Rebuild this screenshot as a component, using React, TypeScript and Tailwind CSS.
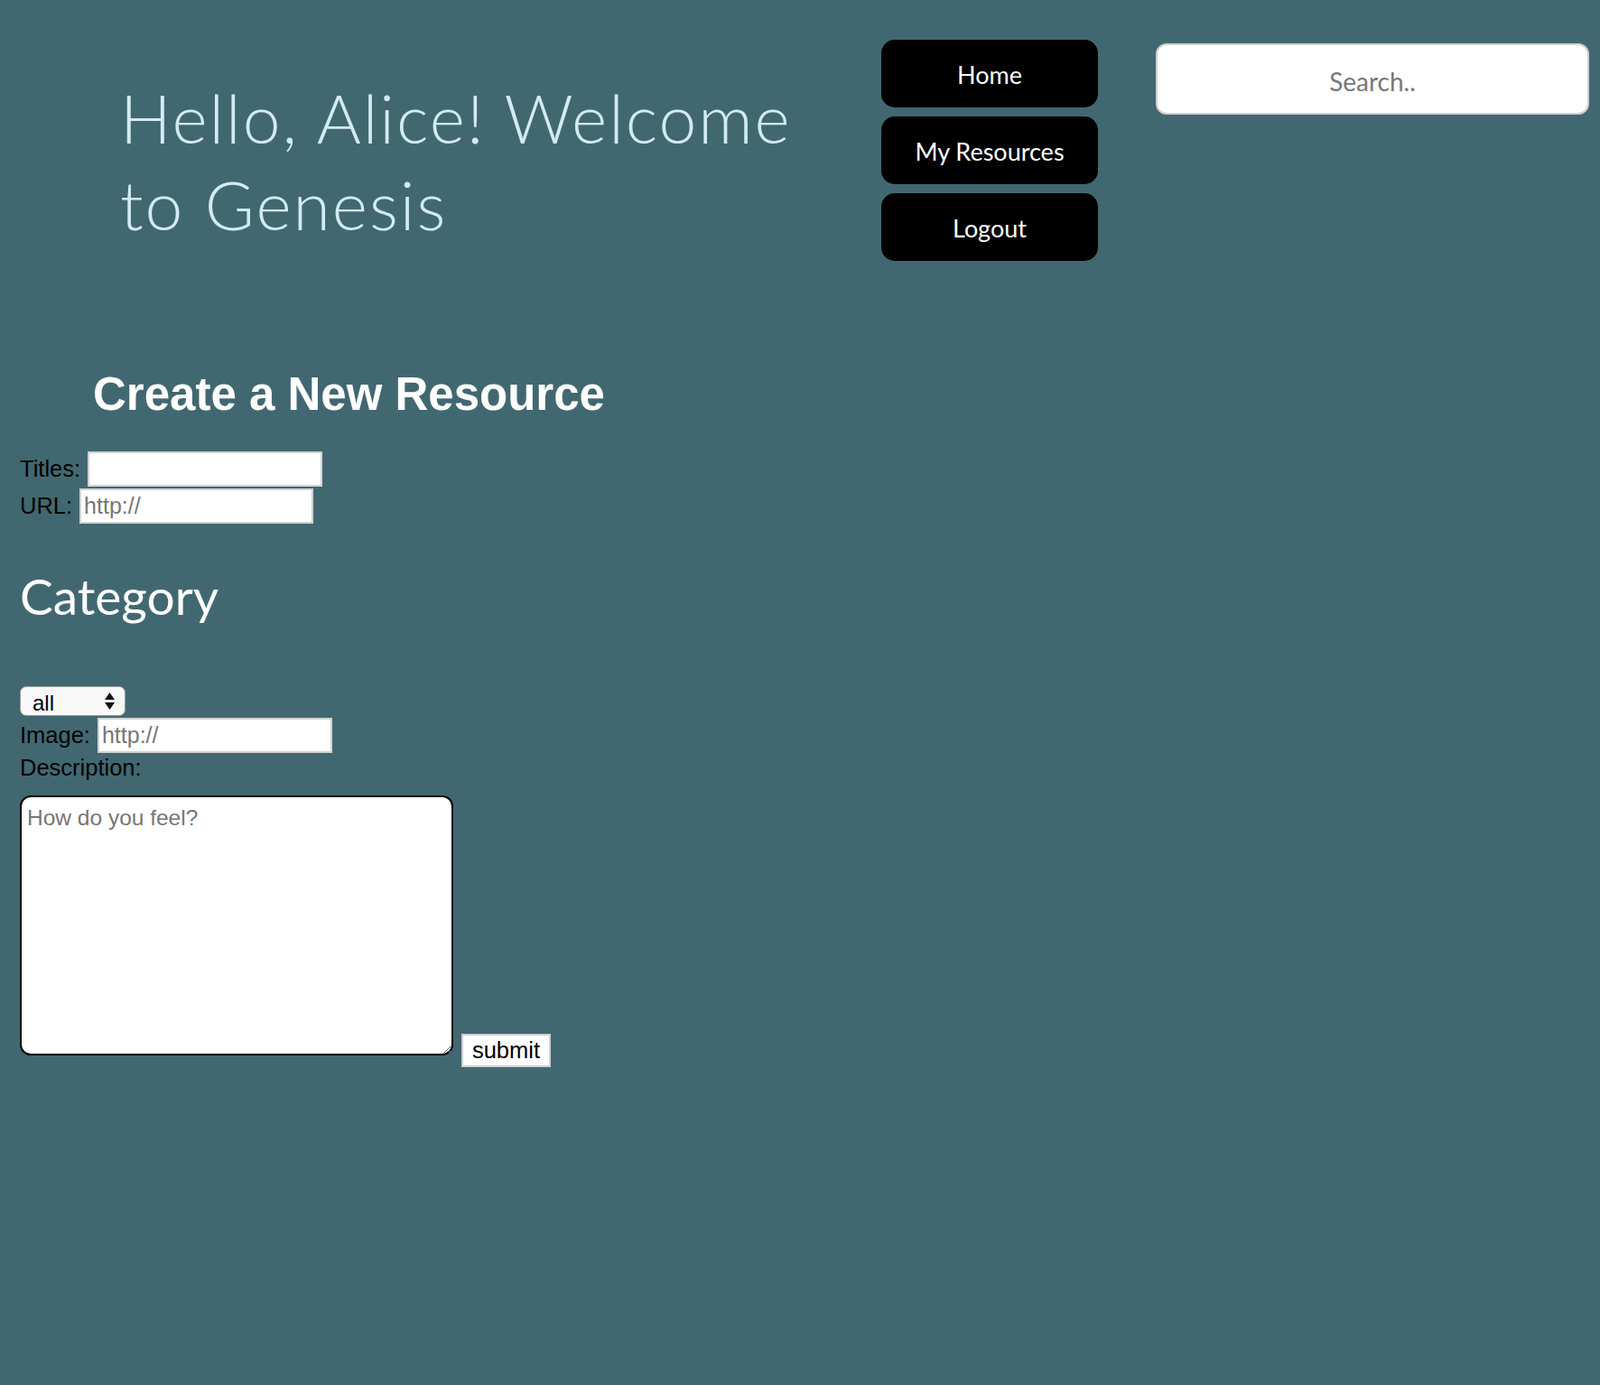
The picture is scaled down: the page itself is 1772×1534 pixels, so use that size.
import { useState } from "react";

const navLinks = ["Home", "My Resources", "Logout"];

const sans = "font-['Liberation_Sans',Arial,sans-serif]";
const round = "font-['Lato','Open_Sans',sans-serif]";

function Field({ label, placeholder, inputClass }: { label: string; placeholder?: string; inputClass: string }) {
  return (
    <div className="flex items-center gap-[8px] h-[39px]">
      <label className="text-black text-[25.5px]">{label}</label>
      <input
        type="text"
        placeholder={placeholder}
        className={`h-full bg-white border-2 border-[#d2d2d2] px-[3px] text-[25px] text-black placeholder:text-[#767676] outline-none ${inputClass}`}
      />
    </div>
  );
}

export default function App() {
  const [category, setCategory] = useState("all");

  return (
    <div className={`min-h-[1534px] w-full bg-[#416871] ${sans}`}>
      <header className="flex items-start">
        <div className="w-[976px] pl-[133px] pr-[40px] pt-[82px]">
          <h1 className={`${round} font-light text-[75px] leading-[96px] tracking-[2px] text-[#d3ebf2]`}>
            Hello, Alice! Welcome to Genesis
          </h1>
        </div>

        <nav className="flex flex-col gap-[10px] pt-[44px] w-[240px]">
          {navLinks.map((link) => (
            <a
              key={link}
              href="#"
              className={`${round} h-[75px] pt-[4px] rounded-[15px] bg-black text-white text-[27px] flex items-center justify-center`}
            >
              {link}
            </a>
          ))}
        </nav>

        <div className="ml-[64px] mt-[48px] w-[480px]">
          <input
            type="text"
            placeholder="Search.."
            className={`${round} w-full h-[79px] pt-[4px] rounded-[12px] bg-white border-2 border-[#cfcfcf] text-center text-[28px] text-black placeholder:text-[#777777] outline-none`}
          />
        </div>
      </header>

      <form className="pl-[22px]" onSubmit={(e) => e.preventDefault()}>
        <h2 className="mt-[119px] ml-[81px] text-[51px] leading-[58px] font-bold text-white">
          Create a New Resource
        </h2>

        <div className="mt-[34px] flex flex-col gap-[2px]">
          <Field label="Titles:" inputClass="w-[260px]" />
          <Field label="URL:" placeholder="http://" inputClass="w-[259px]" />
        </div>

        <h3 className={`${round} mt-[47px] text-[55px] leading-[67px] text-white`}>Category</h3>

        <div className="relative mt-[66px] w-[117px] h-[33px]">
          <select
            value={category}
            onChange={(e) => setCategory(e.target.value)}
            className="appearance-none w-full h-full rounded-[7px] border border-[#9a9a9a] bg-[#f8f8f8] pl-[13px] text-[24px] text-black outline-none"
          >
            <option value="all">all</option>
            <option value="articles">articles</option>
            <option value="videos">videos</option>
          </select>
          <svg
            className="absolute right-[12px] top-[7px] pointer-events-none"
            width="11"
            height="19"
            viewBox="0 0 11 19"
          >
            <path d="M5.5 0 L11 8 L0 8 Z" fill="#111" />
            <path d="M0 11 L11 11 L5.5 19 Z" fill="#111" />
          </svg>
        </div>

        <div className="mt-[2px]">
          <Field label="Image:" placeholder="http://" inputClass="w-[260px]" />
        </div>

        <div className="mt-[2px] text-[25.5px] text-black leading-[29px]">Description:</div>

        <div className="mt-[16px] flex items-end gap-[9px]">
          <textarea
            placeholder="How do you feel?"
            className="w-[480px] h-[288px] mb-[13px] rounded-[12px] border-2 border-black bg-white px-[6px] py-[5px] text-[24.5px] text-black placeholder:text-[#767676] outline-none"
          />
          <button
            type="submit"
            className="h-[37px] w-[99px] bg-white border-2 border-[#cfcfcf] text-[25.5px] text-black flex items-center justify-center"
          >
            submit
          </button>
        </div>
      </form>
    </div>
  );
}
